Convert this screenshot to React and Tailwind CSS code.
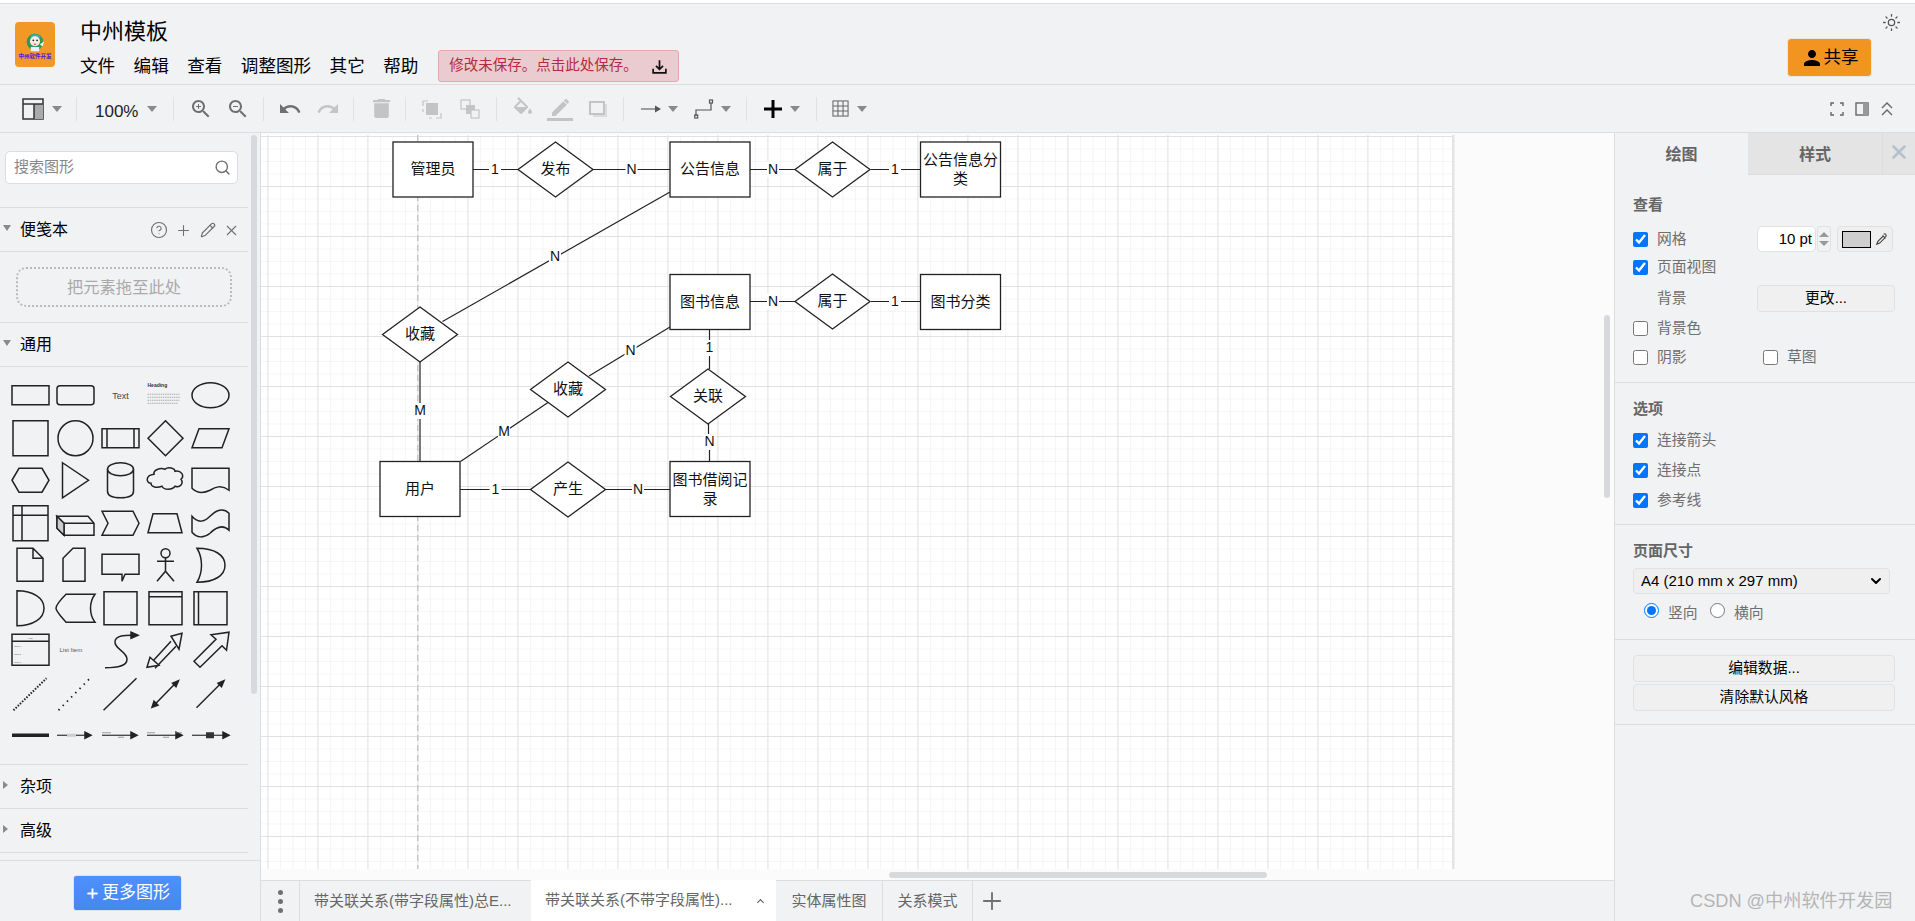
import { ChevronDown, CircleHelp, Pencil, Plus, Search, Sun, X } from 'lucide-react';

const Caret = ({ className = '' }) => (
  <span className={`w-0 h-0 shrink-0 border-x-[5.5px] border-x-transparent border-t-[6px] border-t-[#8a8a8a] ${className}`} />
);

const Sep = ({ className = '' }) => <span className={`w-px h-[24px] shrink-0 bg-[#e0e1e3] ${className}`} />;

const Mi = ({ d, className = '', fill = '#707070' }) => (
  <svg viewBox="0 0 24 24" className={`w-[24px] h-[24px] shrink-0 ${className}`} fill={fill}><path d={d} /></svg>
);

const zoomBase = 'M15.5 14h-.79l-.28-.27C15.41 12.59 16 11.11 16 9.5 16 5.91 13.09 3 9.5 3S3 5.91 3 9.5 5.91 16 9.5 16c1.61 0 3.09-.59 4.23-1.57l.27.28v.79l5 4.99L20.49 19l-4.99-5zm-6 0C7.01 14 5 11.99 5 9.5S7.01 5 9.5 5 14 7.01 14 9.5 11.99 14 9.5 14z';
const undoPath = 'M12.5 8c-2.65 0-5.05.99-6.9 2.6L2 7v9h9l-3.62-3.62c1.39-1.16 3.16-1.88 5.12-1.88 3.54 0 6.55 2.31 7.6 5.5l2.37-.78C21.08 11.03 17.15 8 12.5 8z';
const redoPath = 'M18.4 10.6C16.55 8.99 14.15 8 11.5 8c-4.65 0-8.58 3.03-9.96 7.22L3.9 16c1.05-3.19 4.05-5.5 7.6-5.5 1.95 0 3.73.72 5.12 1.88L13 16h9V7l-3.6 3.6z';
const trashPath = 'M6 19c0 1.1.9 2 2 2h8c1.1 0 2-.9 2-2V7H6v12zM19 4h-3.5l-1-1h-5l-1 1H5v2h14V4z';
const personPath = 'M12 12c2.21 0 4-1.79 4-4s-1.79-4-4-4-4 1.79-4 4 1.79 4 4 4zm0 2c-2.67 0-8 1.34-8 4v2h16v-2c0-2.66-5.33-4-8-4z';

function Toolbar() {
  return (
    <div className="h-[48px] shrink-0 flex items-center border-b border-[#dcdde0] bg-[#f1f2f4]">
      <svg viewBox="0 0 22 22" className="ml-[22px] w-[22px] h-[22px] shrink-0">
        <rect x="1" y="1" width="20" height="20" fill="none" stroke="#333" strokeWidth="1.5" />
        <rect x="12" y="6" width="9" height="15" fill="#aaa" />
        <path d="M1 6h20M12 6v15" stroke="#333" strokeWidth="1.5" />
      </svg>
      <Caret className="ml-[8px]" />
      <Sep className="ml-[14px]" />
      <span className="ml-[18px] w-[42px] text-[17px] text-[#222] leading-none mt-[6px]">100%</span>
      <Caret className="ml-[10px]" />
      <Sep className="ml-[16px]" />
      <Mi className="ml-[15px]" d={zoomBase + 'M12 10h-2v2H9v-2H7V9h2V7h1v2h2v1z'} />
      <Mi className="ml-[13px]" d={zoomBase + 'M7 9h5v1H7z'} />
      <Sep className="ml-[13px]" />
      <Mi className="ml-[14px]" d={undoPath} />
      <Mi className="ml-[14px]" fill="#c4c4c4" d={redoPath} />
      <Sep className="ml-[13px]" />
      <svg viewBox="5 3 14 18" preserveAspectRatio="none" className="ml-[19px] w-[17px] h-[19px] shrink-0" fill="#c4c4c4"><path d={trashPath} /></svg>
      <Sep className="ml-[15px]" />
      <svg viewBox="0 0 20 20" className="ml-[16px] w-[20px] h-[20px] shrink-0" fill="none" stroke="#c4c4c4">
        <path d="M1 7V2h5M14 19h5v-5M1 10v3M10 19H7" strokeWidth="1.2" />
        <rect x="4" y="4" width="12" height="12" fill="#c4c4c4" stroke="none" />
      </svg>
      <svg viewBox="0 0 20 20" className="ml-[18px] w-[20px] h-[20px] shrink-0" stroke="#c4c4c4">
        <rect x="1" y="1" width="9" height="9" fill="#f1f2f4" strokeWidth="1.2" />
        <rect x="6" y="6" width="9" height="9" fill="#c4c4c4" stroke="none" />
        <rect x="11" y="11" width="8" height="8" fill="#f1f2f4" strokeWidth="1.2" />
      </svg>
      <Sep className="ml-[16px]" />
      <svg viewBox="0 0 24 24" className="ml-[14px] w-[24px] h-[24px] shrink-0" fill="#c4c4c4">
        <path d="M16.56 8.94L7.62 0 6.21 1.41l2.38 2.38-5.15 5.15c-.59.59-.59 1.54 0 2.12l5.5 5.5c.29.29.68.44 1.06.44s.77-.15 1.06-.44l5.5-5.5c.59-.58.59-1.53 0-2.12zM5.21 10L10 5.21 14.79 10H5.21zM19 11.5s-2 2.17-2 3.5c0 1.1.9 2 2 2s2-.9 2-2c0-1.33-2-3.5-2-3.5z" />
      </svg>
      <svg viewBox="0 0 26 24" className="ml-[12px] w-[26px] h-[24px] shrink-0" fill="#c4c4c4">
        <path d="M5 15.5V19h3.5L19.8 7.7l-3.5-3.5L5 15.5zM21.7 5.8c.4-.4.4-1 0-1.4l-2.1-2.1c-.4-.4-1-.4-1.4 0l-1.3 1.3 3.5 3.5 1.3-1.3z" />
        <rect x="0" y="21" width="26" height="3" />
      </svg>
      <svg viewBox="0 0 20 20" className="ml-[15px] w-[20px] h-[20px] shrink-0" fill="none">
        <rect x="5" y="5" width="14" height="13" fill="#dcdcdc" />
        <rect x="2" y="3" width="14" height="12" fill="#f1f2f4" stroke="#c4c4c4" strokeWidth="2" />
      </svg>
      <Sep className="ml-[15px]" />
      <svg viewBox="0 0 20 10" className="ml-[17px] w-[20px] h-[10px] shrink-0">
        <path d="M0 5h15" stroke="#666" strokeWidth="1.2" />
        <path d="M14 1.5 20 5l-6 3.5z" fill="#555" />
      </svg>
      <Caret className="ml-[7px]" />
      <svg viewBox="0 0 20 20" className="ml-[16px] w-[20px] h-[20px] shrink-0" fill="none" stroke="#555" strokeWidth="1.2">
        <path d="M2 17v-6h15V4" />
        <rect x="0.7" y="16" width="3" height="3" />
        <rect x="15.5" y="1" width="3" height="3" />
      </svg>
      <Caret className="ml-[7px]" />
      <Sep className="ml-[15px]" />
      <svg viewBox="0 0 18 18" className="ml-[17px] w-[18px] h-[18px] shrink-0" fill="#000">
        <path d="M7.5 0h3v7.5H18v3h-7.5V18h-3v-7.5H0v-3h7.5z" />
      </svg>
      <Caret className="ml-[8px]" />
      <Sep className="ml-[16px]" />
      <svg viewBox="0 0 18 18" className="ml-[15px] w-[17px] h-[17px] shrink-0" fill="none" stroke="#666" strokeWidth="1.1">
        <rect x="1" y="1" width="16" height="16" />
        <path d="M6.3 1v16M11.7 1v16M1 6.3h16M1 11.7h16" />
      </svg>
      <Caret className="ml-[8px]" />
      <svg viewBox="0 0 14 14" className="ml-auto w-[14px] h-[14px] shrink-0" fill="none" stroke="#666" strokeWidth="1.4">
        <path d="M1 4V1h3M10 1h3v3M1 10v3h3M10 13h3v-3" />
      </svg>
      <svg viewBox="0 0 14 14" className="ml-[11px] w-[14px] h-[14px] shrink-0">
        <rect x="1" y="1" width="12" height="12" fill="none" stroke="#666" strokeWidth="1.4" />
        <rect x="8" y="1" width="5" height="12" fill="#999" />
      </svg>
      <svg viewBox="0 0 14 14" className="ml-[11px] mr-[21px] w-[14px] h-[14px] shrink-0" fill="none" stroke="#666" strokeWidth="1.4">
        <path d="M2 6l5-5 5 5M2 13l5-5 5 5" />
      </svg>
    </div>
  );
}

function Header() {
  return (
    <div className="relative h-[81px] shrink-0 flex border-b border-[#dcdde0] bg-[#f1f2f4]">
      <div className="ml-[15px] mt-[18px] w-[40px] h-[45px] rounded-[4px] bg-[#f29827] shrink-0 flex flex-col items-center overflow-hidden">
        <svg viewBox="0 0 24 26" className="w-[20px] h-[22px] mt-[9px]">
          <circle cx="12" cy="13" r="10" fill="#2f9a58" />
          <path d="M6 8c1-5 11-6 13 0z" fill="#4aa6d8" />
          <circle cx="12" cy="12" r="6" fill="#fbeee0" />
          <circle cx="10" cy="11" r="1.1" fill="#222" />
          <circle cx="14.5" cy="11" r="1.1" fill="#222" />
          <path d="M10 15h4l-2 2z" fill="#d33" />
          <path d="M7 19h10v5H7z" fill="#eef" />
          <path d="M18 16l5-4-2 6z" fill="#fff" />
        </svg>
        <span className="text-[5.5px] leading-[7px] text-[#4a22d8] font-bold whitespace-nowrap">中州软件开发</span>
      </div>
      <div className="ml-[25px] mt-[13px] flex flex-col">
        <div className="text-[22px] leading-[30px] text-black">中州模板</div>
        <div className="mt-[3px] h-[32px] flex items-center text-[17.6px] text-black">
          <div className="flex gap-[18.4px]">
            <span>文件</span>
            <span>编辑</span>
            <span>查看</span>
            <span>调整图形</span>
            <span>其它</span>
            <span>帮助</span>
          </div>
          <div className="ml-[20px] w-[241px] h-[32px] flex items-center rounded-[3px] border border-[#e2a8b0] bg-[#eaccd0] text-[14.5px] text-[#b52a3e] pl-[10px]">
            <span>修改未保存。点击此处保存。</span>
            <svg viewBox="0 0 24 24" className="ml-[13px] w-[17px] h-[17px]" fill="none" stroke="#111" strokeWidth="2.4">
              <path d="M12 3v13M7 11l5 5 5-5M3 15v6h18v-6" />
            </svg>
          </div>
        </div>
      </div>
      <button className="ml-auto mr-[43px] mt-[34px] w-[85px] h-[39px] rounded-[4px] bg-[#f29420] border border-[#e7e7e7] flex items-center justify-center text-[17.5px] text-black">
        <Mi d={personPath} fill="#000" className="-ml-[1px]" />
        <span>共享</span>
      </button>
      <Sun className="absolute right-[14px] top-[9px] w-[19px] h-[19px] text-[#555]" strokeWidth={1.6} />
    </div>
  );
}

const S = ({ children }) => (
  <svg viewBox="0 0 45 42" className="w-[45px] h-[42.5px]" fill="none" stroke="#222" strokeWidth="1.5">{children}</svg>
);

const arrowHead = (x, y) => <path d={`M${x - 6} ${y - 3}L${x} ${y}L${x - 6} ${y + 3}z`} fill="#222" />;

const tiny = { fontSize: 2.5, fill: '#555', stroke: 'none' };

const shapes = [
  <rect x="4" y="11.5" width="37" height="19" />,
  <rect x="4" y="11.5" width="37" height="19" rx="3" />,
  <text x="22.5" y="24.5" textAnchor="middle" fontSize="9" fill="#444" stroke="none">Text</text>,
  <>
    <text x="4.5" y="13" fontSize="5" fontWeight="700" fill="#334" stroke="none">Heading</text>
    <path d="M4.5 20h32M4.5 23h33M4.5 26h32M4.5 29h30" stroke="#999" strokeWidth="0.8" strokeDasharray="1.5 0.7" />
  </>,
  <ellipse cx="22.5" cy="21" rx="18.5" ry="12.5" />,

  <rect x="5" y="3.5" width="35" height="35" />,
  <circle cx="22.5" cy="21" r="17.5" />,
  <>
    <rect x="4" y="11.5" width="37" height="19" />
    <path d="M9 11.5v19M36 11.5v19" />
  </>,
  <path d="M22.5 3.5L40 21L22.5 38.5L5 21Z" />,
  <path d="M4 30.5L11 11.5H41L34 30.5Z" />,

  <path d="M4 21L11 9H34L41 21L34 33H11Z" />,
  <path d="M9.5 3.5L35.5 21L9.5 38.5Z" />,
  <>
    <ellipse cx="22.5" cy="10" rx="13" ry="6.5" />
    <path d="M9.5 10V32c0 4 5 6.5 13 6.5s13-2.5 13-6.5V10" />
  </>,
  <path d="M11 15c-1-4 6-7 11-5c3-3 10-1 10 2c6-1 10 4 6 8c3 4-1 9-6 7c-3 4-11 4-13 0c-5 2-11 1-11-3c-5 0-6-8 3-9z" />,
  <path d="M4 9H41V31c-8-6-14-3-19 0c-6 3-13 3-18-2Z" />,

  <>
    <rect x="5" y="3.5" width="35" height="35" />
    <path d="M14 3.5V38.5M5 13H40" />
  </>,
  <>
    <path d="M4 14L11 21V33H41V21L35 14H9Z" />
    <path d="M4 14V26L11 33M11 21H41" />
    <path d="M4 14L11 21V33L4 26Z" fill="#ccc" />
  </>,
  <path d="M4 9H35L41 21L35 33H4L10 21Z" />,
  <path d="M10 11.5H34L39 30.5H5Z" />,
  <path d="M4 14c6 7 12 6 18 0c6-6 13-9 19-3V28c-6-6-13-3-19 3c-6 5-13 5-18-1Z" />,

  <path d="M9 4H25L35 14V37H9Z M25 4V14H35" />,
  <path d="M10 14L20 4H32V37H10Z" />,
  <path d="M4 10H41V30H27L24 37V30H4Z" />,
  <>
    <circle cx="22.5" cy="9" r="4.5" />
    <path d="M22.5 13.5V28M14 17H31M14 37L22.5 27L31 37" />
  </>,
  <path d="M9 4c18 0 28 7 28 17s-10 17-28 17c6-10 6-24 0-34z" />,

  <path d="M9 3.5c16 0 27 7 27 17.5s-11 17.5-27 17.5Z" />,
  <path d="M13 7H42c-6 8-6 20 0 28H13C7 28 3 24 3 21s4-8 10-14z" />,
  <rect x="6" y="4.5" width="33" height="33" />,
  <>
    <rect x="6" y="4.5" width="33" height="33" />
    <path d="M6 9.5H39" />
  </>,
  <>
    <rect x="6" y="4.5" width="33" height="33" />
    <path d="M10.5 4.5V37.5" />
  </>,

  <>
    <rect x="4" y="5" width="37" height="31" />
    <path d="M4 12H41" />
    <text x="22.5" y="10" textAnchor="middle" style={tiny}>List</text>
    <text x="6" y="18" style={tiny}>Item 1</text>
    <text x="6" y="26" style={tiny}>Item 2</text>
    <text x="6" y="34" style={tiny}>Item 3</text>
  </>,
  <text x="6.5" y="23" fontSize="6" fill="#556" stroke="none">List Item</text>,
  <>
    <path d="M7 38.5C20 38.5 29 37 29 30C29 22 16 20 17 12C18 6 27 6 34 6" />
    <path d="M40 6L33 3V9Z" fill="#222" />
  </>,
  <>
    <path d="M7 35L28 12M12 39L33 17" />
    <path d="M39 4L28 7L36 20ZM4 38L7 28L16 36Z" fill="#f1f2f4" />
  </>,
  <path d="M6 32L28 10L23 5.5L41 3L38.5 21L34 16.5L12 38Z" />,

  <path d="M5.5 38L38.5 6" strokeWidth="2" strokeDasharray="1.5 1.5" />,
  <path d="M5.5 38L36 7" strokeWidth="1.8" strokeDasharray="1.5 4.5" />,
  <path d="M5.5 38L38.5 6" />,
  <>
    <path d="M11 33L33 10.5" />
    <path d="M9 35L11 29L15 33ZM35.5 8.5L33 14.5L29.5 11Z" fill="#222" />
  </>,
  <>
    <path d="M8.5 35.5L33 11" />
    <path d="M36 8.5L33.5 14.5L30 11Z" fill="#222" />
  </>,

  <path d="M4 21H41" strokeWidth="3.4" />,
  <>
    <path d="M4 21H34" strokeWidth="1.1" />
    {arrowHead(38, 21)}
    <rect x="14" y="19.5" width="9" height="3" fill="#ccc" stroke="none" />
  </>,
  <>
    <path d="M4 21H36" strokeWidth="1.1" />
    {arrowHead(39, 21)}
    <path d="M4 18.5H13M20 23H26" stroke="#777" strokeWidth="0.7" />
  </>,
  <>
    <path d="M4 21H36" strokeWidth="1.1" />
    {arrowHead(39, 21)}
    <path d="M4 18.5H12M32 18.5H39M20 23H26" stroke="#777" strokeWidth="0.7" />
  </>,
  <>
    <path d="M4 21H36" strokeWidth="1.1" />
    {arrowHead(41, 21)}
    <rect x="18" y="18" width="8" height="6" fill="#333" stroke="none" />
  </>,
];

function SectionHead({ label, open = true, children }) {
  return (
    <div className="h-[44px] pt-px flex items-center border-b border-[#dcdde0] text-[16px] text-black relative">
      {open ? (
        <span className="absolute left-[3px] top-[17px] w-0 h-0 border-x-[4.5px] border-x-transparent border-t-[6px] border-t-[#8a8a8a]" />
      ) : (
        <span className="absolute left-[3px] top-[16px] w-0 h-0 border-y-[4.5px] border-y-transparent border-l-[5px] border-l-[#8a8a8a]" />
      )}
      <span className="ml-[20px]">{label}</span>
      {children}
    </div>
  );
}

function Sidebar() {
  return (
    <div className="relative w-[261px] shrink-0 flex flex-col border-r border-[#dcdde0] bg-[#f1f2f4]">
      <div className="w-[248px] flex-1">
        <div className="pt-[18px] pb-[23px] border-b border-[#dcdde0]">
          <div className="ml-[5px] w-[233px] h-[33px] rounded-[5px] border border-[#dcdde0] bg-white flex items-center justify-between pl-[8px] pr-[6px] text-[15px] text-[#888]">
            <span>搜索图形</span>
            <Search className="w-[17px] h-[17px] text-[#707070]" strokeWidth={2} />
          </div>
        </div>
        <SectionHead label="便笺本">
          <div className="absolute left-[150px] top-[13px] flex items-center gap-[7px] text-[#707070]">
            <CircleHelp className="w-[18px] h-[18px]" strokeWidth={1.5} />
            <Plus className="w-[17px] h-[17px]" strokeWidth={1.5} />
            <Pencil className="w-[16px] h-[16px] ml-[1px]" strokeWidth={1.8} />
            <X className="w-[17px] h-[17px]" strokeWidth={1.5} />
          </div>
        </SectionHead>
        <div className="pt-[15px] pb-[15px] border-b border-[#dcdde0]">
          <div className="ml-[16px] w-[216px] h-[40px] rounded-[10px] border-2 border-dotted border-[#bbb] flex items-center justify-center text-[16.3px] text-[#aaa]">把元素拖至此处</div>
        </div>
        <SectionHead label="通用" />
        <div className="pt-[7px] pb-[7.5px] pl-[8px] grid grid-cols-[repeat(5,45px)] border-b border-[#dcdde0]">
          {shapes.map((shape, i) => <S key={i}>{shape}</S>)}
        </div>
        <SectionHead label="杂项" open={false} />
        <SectionHead label="高级" open={false} />
      </div>
      <div className="h-[61px] shrink-0 border-t border-[#dcdde0] flex items-start">
        <button className="ml-[73px] mt-[14px] w-[109px] h-[36px] rounded-[3px] bg-[linear-gradient(#4d90fe,#4787ed)] border border-[#dfe4ec] text-white text-[17px] flex items-center justify-center">
          <Plus className="w-[15px] h-[15px] mr-[2px]" strokeWidth={3} />
          更多图形
        </button>
      </div>
      <div className="absolute left-[251px] top-[2px] w-[6px] h-[559px] rounded-[3px] bg-[#d8d9dc]" />
    </div>
  );
}

const boxes = [
  [393, 142, ['管理员']],
  [670, 142, ['公告信息']],
  [920.5, 142, ['公告信息分', '类']],
  [670, 274.5, ['图书信息']],
  [920.5, 274.5, ['图书分类']],
  [380, 461.5, ['用户']],
  [670, 461.5, ['图书借阅记', '录']],
];

const diamonds = [
  [555.5, 169.5, '发布'],
  [832.5, 169.5, '属于'],
  [832.5, 301.5, '属于'],
  [420, 334.5, '收藏'],
  [568, 389.5, '收藏'],
  [708, 396.5, '关联'],
  [568, 489.5, '产生'],
];

const edges = [
  'M473 169.5H518', 'M593 169.5H670', 'M750 169.5H796', 'M871 169.5H920.5',
  'M670 192L442.5 321.5',
  'M750 301.5H796', 'M871 301.5H920.5',
  'M670 327L589 376',
  'M709.5 329.5V369', 'M708.5 424V442H709.5V461.5',
  'M420 362V461.5', 'M460.5 461.5L548 402.5',
  'M460 489.5H530.5', 'M605.5 489.5H670',
];

const edgeLabels = [
  [495, 169.5, '1'], [631.5, 169.5, 'N'], [773, 169.5, 'N'], [895, 169.5, '1'],
  [555, 257, 'N'],
  [773, 301.5, 'N'], [895, 301.5, '1'],
  [630.5, 351, 'N'], [709.5, 348, '1'], [709.5, 442, 'N'],
  [420, 411, 'M'], [504, 432, 'M'],
  [495.5, 489.5, '1'], [638, 489.5, 'N'],
];

function Canvas() {
  return (
    <div className="relative flex-1 overflow-hidden bg-[#fbfbfb]">
      <svg viewBox="261 133 1353 747" className="absolute left-0 top-0 w-[1353px] h-[747px]">
        <defs>
          <pattern id="minor" x="367.4" y="186" width="12.5" height="12.5" patternUnits="userSpaceOnUse">
            <path d="M12.5 0H0V12.5" fill="none" stroke="#f3f3f3" strokeWidth="1.5" />
          </pattern>
          <pattern id="major" x="367.4" y="186" width="50" height="50" patternUnits="userSpaceOnUse">
            <path d="M50 0H0V50" fill="none" stroke="#dadada" strokeWidth="1.3" />
          </pattern>
        </defs>
        <rect x="261" y="135" width="1191" height="734" fill="#fff" />
        <rect x="261" y="135" width="1191" height="734" fill="url(#minor)" />
        <rect x="261" y="135" width="1191" height="734" fill="url(#major)" />
        <rect x="1452" y="135" width="2.5" height="734" fill="#e4e4e4" />
        <path d="M417.7 135V869" stroke="#c4c4c4" strokeWidth="1.3" strokeDasharray="6 4" />
        <g stroke="#222" strokeWidth="1.2" fill="none">
          {edges.map((d) => <path key={d} d={d} />)}
        </g>
        {edgeLabels.map(([x, y, t], i) => (
          <g key={i}>
            <rect x={x - 6} y={y - 8} width="12" height="16" fill="#fff" />
            <text x={x} y={y + 4} textAnchor="middle" fontSize="14" fill="#111">{t}</text>
          </g>
        ))}
        {boxes.map(([x, y, lines]) => (
          <g key={lines[0]}>
            <rect x={x} y={y} width="80" height="55" fill="#fff" stroke="#222" strokeWidth="1.3" />
            {lines.map((line, i) => (
              <text key={line} x={x + 40} y={y + (lines.length > 1 ? 23 + i * 19 : 32)} textAnchor="middle" fontSize="15" fill="#111">{line}</text>
            ))}
          </g>
        ))}
        {diamonds.map(([x, y, t]) => (
          <g key={`${x}${y}`}>
            <path d={`M${x} ${y - 27.5}L${x + 37.5} ${y}L${x} ${y + 27.5}L${x - 37.5} ${y}Z`} fill="#fff" stroke="#222" strokeWidth="1.3" />
            <text x={x} y={y + 4} textAnchor="middle" fontSize="15" fill="#111">{t}</text>
          </g>
        ))}
      </svg>
      <div className="absolute left-[1343px] top-[182px] w-[6px] h-[183px] rounded-[3px] bg-[#d8d9dc]" />
      <div className="absolute left-[628px] top-[739px] w-[378px] h-[6px] rounded-[3px] bg-[#d8d9dc]" />
    </div>
  );
}

function Tabs() {
  return (
    <div className="h-[41px] shrink-0 flex items-stretch border-t border-[#dcdde0] bg-[#f1f2f4] text-[15px] text-[#666]">
      <div className="w-[39px] border-r border-[#dcdde0] flex flex-col items-center justify-center gap-[4px]">
        <span className="w-[5px] h-[5px] rounded-full bg-[#707070]" />
        <span className="w-[5px] h-[5px] rounded-full bg-[#707070]" />
        <span className="w-[5px] h-[5px] rounded-full bg-[#707070]" />
      </div>
      <div className="w-[231px] pl-[14px] flex items-center whitespace-nowrap">带关联关系(带字段属性)总E...</div>
      <div className="w-[245px] pl-[14px] flex items-center whitespace-nowrap bg-white -mt-px">
        <span>带关联关系(不带字段属性)...</span>
        <span className="ml-[25px] w-[5px] h-[5px] border-l border-t border-[#555] rotate-45 mt-[3px]" />
      </div>
      <div className="w-[107px] flex items-center justify-center border-r border-[#dcdde0]">实体属性图</div>
      <div className="w-[90px] flex items-center justify-center border-r border-[#dcdde0]">关系模式</div>
      <div className="w-[38px] flex items-center justify-center">
        <Plus className="w-[28px] h-[28px] text-[#707070]" strokeWidth={1.6} />
      </div>
    </div>
  );
}

const Check = ({ checked = false, className = '' }) => (
  <input type="checkbox" defaultChecked={checked} className={`w-[15px] h-[15px] shrink-0 accent-[#0075ff] ${className}`} />
);

const Label = ({ children, className = '' }) => (
  <span className={`text-[14.8px] text-[#6f6f6f] ${className}`}>{children}</span>
);

const Row = ({ className = '', children }) => (
  <div className={`h-[26px] flex items-center ${className}`}>{children}</div>
);

const Title = ({ children }) => (
  <div className="h-[20px] flex items-center text-[15px] font-bold text-[#666]">{children}</div>
);

const GrayBtn = ({ children, className = '' }) => (
  <button className={`h-[27px] rounded-[4px] border border-[#e0e1e3] bg-[#f0f0f1] text-[14.8px] text-black flex items-center justify-center ${className}`}>{children}</button>
);

function RightPanel() {
  return (
    <div className="w-[301px] shrink-0 flex flex-col border-l border-[#dcdde0] bg-[#f1f2f4]">
      <div className="h-[42px] shrink-0 flex text-[16px] font-bold text-[#666]">
        <div className="w-[133px] pt-[2px] flex items-center justify-center">绘图</div>
        <div className="w-[134px] pt-[2px] flex items-center justify-center bg-[#e4e4e5] border-b border-[#dcdde0]">样式</div>
        <div className="flex-1 pb-[3px] flex items-center justify-center bg-[#e4e4e5] border-l border-b border-[#dcdde0]">
          <X className="w-[22px] h-[22px] text-[#b4c0cc]" strokeWidth={2.8} />
        </div>
      </div>
      <div className="pl-[18px] pt-[20px] pb-[12px] border-b border-[#dcdde0]">
        <Title>查看</Title>
        <Row className="mt-[11px]">
          <Check checked />
          <Label className="ml-[9px] w-[100px]">网格</Label>
          <div className="w-[59px] h-[26px] rounded-[5px] border border-[#e0e1e3] bg-white flex items-center justify-end pr-[3px] text-[15px] text-black">10 pt</div>
          <div className="ml-px w-[14px] h-[26px] rounded-[3px] border border-[#e0e1e3] flex flex-col items-center justify-center gap-[4px]">
            <span className="w-0 h-0 border-x-[5px] border-x-transparent border-b-[5px] border-b-[#999]" />
            <span className="w-0 h-0 border-x-[5px] border-x-transparent border-t-[5px] border-t-[#999]" />
          </div>
          <div className="ml-[6px] w-[56px] h-[26px] rounded-[4px] border border-[#e0e1e3] bg-[#efefef] flex items-center pl-[4px]">
            <span className="w-[29px] h-[17px] bg-[#cfcfcf] border border-black" />
            <svg viewBox="0 0 24 24" className="ml-[4px] w-[14px] h-[14px]" fill="none" stroke="#444" strokeWidth="2">
              <path d="M3 21l2-5 9-9 3 3-9 9zM13 6l5 5M15 4c2-3 6 1 3 5" />
            </svg>
          </div>
        </Row>
        <Row className="mt-[2px]">
          <Check checked />
          <Label className="ml-[9px]">页面视图</Label>
        </Row>
        <Row className="mt-[5px]">
          <Label className="ml-[24px] w-[100px]">背景</Label>
          <GrayBtn className="w-[138px]">更改...</GrayBtn>
        </Row>
        <Row className="mt-[4px]">
          <Check />
          <Label className="ml-[9px]">背景色</Label>
        </Row>
        <Row className="mt-[3px]">
          <Check />
          <Label className="ml-[9px] w-[106px]">阴影</Label>
          <Check />
          <Label className="ml-[9px]">草图</Label>
        </Row>
      </div>
      <div className="pl-[18px] pt-[16px] pb-[11px] border-b border-[#dcdde0]">
        <Title>选项</Title>
        <Row className="mt-[8px]">
          <Check checked />
          <Label className="ml-[9px]">连接箭头</Label>
        </Row>
        <Row className="mt-[4px]">
          <Check checked />
          <Label className="ml-[9px]">连接点</Label>
        </Row>
        <Row className="mt-[4px]">
          <Check checked />
          <Label className="ml-[9px]">参考线</Label>
        </Row>
      </div>
      <div className="pl-[18px] pt-[16px] pb-[17px] border-b border-[#dcdde0]">
        <Title>页面尺寸</Title>
        <div className="mt-[7px] w-[257px] h-[26px] rounded-[4px] border border-[#e0e1e3] bg-[#efeff0] flex items-center justify-between pl-[7px] pr-[5px] text-[15px] text-black">
          <span>A4 (210 mm x 297 mm)</span>
          <ChevronDown className="w-[16px] h-[16px]" strokeWidth={3} />
        </div>
        <div className="mt-[6px] h-[22px] flex items-center">
          <input type="radio" name="orient" defaultChecked className="ml-[11px] w-[15px] h-[15px] accent-[#0075ff] -mt-[2px]" />
          <Label className="ml-[9px] w-[42px] mt-[4px]">竖向</Label>
          <input type="radio" name="orient" className="w-[15px] h-[15px] -mt-[2px]" />
          <Label className="ml-[9px] mt-[4px]">横向</Label>
        </div>
      </div>
      <div className="pl-[18px] pt-[15px] pb-[13px] border-b border-[#dcdde0] flex flex-col gap-[2px]">
        <GrayBtn className="w-[262px]">编辑数据...</GrayBtn>
        <GrayBtn className="w-[262px]">清除默认风格</GrayBtn>
      </div>
    </div>
  );
}

export default function App() {
  return (
    <div className="relative w-screen h-screen overflow-hidden flex flex-col bg-[#f1f2f4] font-['Liberation_Sans','Noto_Sans_CJK_SC',sans-serif]">
      <div className="h-[4px] shrink-0 bg-white border-b border-[#dcdde0]" />
      <Header />
      <Toolbar />
      <div className="flex-1 min-h-0 flex">
        <Sidebar />
        <div className="flex-1 min-w-0 flex flex-col">
          <Canvas />
          <Tabs />
        </div>
        <RightPanel />
      </div>
      <div className="absolute left-[1690px] top-[888px] text-[18.2px] text-[#b5b5b5] whitespace-nowrap">CSDN @中州软件开发园</div>
    </div>
  );
}
